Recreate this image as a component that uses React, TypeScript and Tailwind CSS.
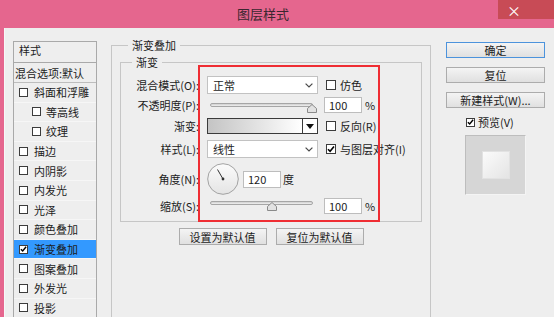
import React from 'react';

type Item = { name: string; indent?: boolean; checked?: boolean; active?: boolean };

const items: Item[] = [
  { name: '斜面和浮雕' },
  { name: '等高线', indent: true },
  { name: '纹理', indent: true },
  { name: '描边' },
  { name: '内阴影' },
  { name: '内发光' },
  { name: '光泽' },
  { name: '颜色叠加' },
  { name: '渐变叠加', checked: true, active: true },
  { name: '图案叠加' },
  { name: '外发光' },
  { name: '投影' },
];

const Check = ({ checked, className }: { checked?: boolean; className: string }) => (
  <span className={`flex shrink-0 items-center justify-center border border-[#3c3c3c] bg-white ${className}`}>
    {checked && (
      <svg width="8" height="8" viewBox="0 0 8 8">
        <path d="M1 4.2 L3.1 6.3 L7 1.5" stroke="#000" strokeWidth="1.6" fill="none" />
      </svg>
    )}
  </span>
);

const Select = ({ value }: { value: string }) => (
  <div className="flex h-[18px] w-[111px] items-center justify-between border border-[#c2c2c2] bg-white pl-[5px] pr-[4px]">
    <span>{value}</span>
    <svg width="8" height="5" viewBox="0 0 8 5">
      <path d="M0.6 0.6 L4 4 L7.4 0.6" stroke="#4a4a4a" strokeWidth="1.2" fill="none" />
    </svg>
  </div>
);

const Slider = ({ thumb, className }: { thumb: string; className: string }) => (
  <div className={`relative h-[12px] w-[111px] self-start ${className}`}>
    <div className="absolute left-[3px] right-[5px] top-0 h-[4px] rounded-full border border-[#a6a6a6] bg-gradient-to-b from-[#cfcfcf] to-[#f0f0f0]" />
    <svg className={`absolute top-[1px] ${thumb}`} width="10" height="9" viewBox="0 0 10 9">
      <path d="M5 0.5 L9.5 4.5 L9.5 8.5 L0.5 8.5 L0.5 4.5 Z" fill="#e2e2e2" stroke="#8a8a8a" strokeWidth="1" />
    </svg>
  </div>
);

const NumInput = ({ value, className = 'w-[38px]' }: { value: string; className?: string }) => (
  <div className={`flex h-[16px] items-center border border-[#bdbdbd] bg-white pl-[4px] ${className}`}>{value}</div>
);

const Row = ({ h, label, children, extra }: { h: string; label: string; children: React.ReactNode; extra?: React.ReactNode }) => (
  <div className={`flex items-center ${h}`}>
    <div className="w-[78px] text-right">{label}</div>
    <div className="ml-[8px] flex w-[111px] items-center self-stretch">{children}</div>
    <div className="ml-[6px] flex items-center">{extra}</div>
  </div>
);

const CheckLabel = ({ text, checked }: { text: string; checked?: boolean }) => (
  <div className="ml-[2px] flex items-center">
    <Check checked={checked} className="h-[10px] w-[10px]" />
    <span className="ml-[4px]">{text}</span>
  </div>
);

const Btn = ({ children, className = '', primary }: { children: React.ReactNode; className?: string; primary?: boolean }) => (
  <div
    className={`flex items-center justify-center bg-gradient-to-b from-[#f4f4f4] to-[#e0e0e0] ${
      primary ? 'border border-[#4c93dc]' : 'border border-[#acacac]'
    } ${className}`}
  >
    {children}
  </div>
);

const Dial = () => (
  <svg width="32" height="32" viewBox="0 0 32 32">
    <defs>
      <linearGradient id="dialg" x1="0" y1="0" x2="0" y2="1">
        <stop offset="0" stopColor="#fbfbfb" />
        <stop offset="1" stopColor="#e4e4e4" />
      </linearGradient>
    </defs>
    <circle cx="16" cy="16" r="15.3" fill="url(#dialg)" stroke="#a2a2a2" strokeWidth="1" />
    <line x1="16" y1="16" x2="10.5" y2="6.5" stroke="#333" strokeWidth="1" />
    <circle cx="16" cy="16" r="1.4" fill="#333" />
  </svg>
);

export default function App() {
  return (
    <div className="h-[317px] w-[554px] overflow-hidden bg-[#e5668e] font-['Noto_Sans_CJK_SC',sans-serif] text-[11px] leading-[14px] text-[#1c1c1c]">
      {/* title bar */}
      <div className="flex h-[28px]">
        <div className="flex-1 pl-[237px] pt-[5px] text-[13px] leading-[18px] text-[#3b2630]">图层样式</div>
        <div className="flex h-[19px] w-[56px] items-center bg-[#c84b56] pl-[9px] text-[14px] text-white">×</div>
      </div>

      {/* body */}
      <div className="ml-[4px] flex h-[289px] overflow-hidden border-l border-[#f7f7f7] bg-[#eeeeee]">
        {/* style list */}
        <div className="ml-[8px] mt-[13px] h-[300px] w-[84px] shrink-0 border-x border-t border-[#a9a9a9]">
          <div className="h-[21px] border-b border-[#a9a9a9] pl-[5px] pt-[1px]">样式</div>
          <div className="h-[20px] border-b border-[#bdbdbd] pl-[1px] pt-[3px] whitespace-nowrap">混合选项:默认</div>
          {items.map((it) => (
            <div
              key={it.name}
              className={`flex h-[19.6px] items-center border-b border-[#f6f6f6] ${it.indent ? 'pl-[18px]' : 'pl-[5px]'} ${
                it.active ? 'bg-[#3399ff]' : ''
              }`}
            >
              <Check checked={it.checked} className="h-[9px] w-[9px]" />
              <span className={it.indent ? 'ml-[5px]' : 'ml-[6px]'}>{it.name}</span>
            </div>
          ))}
        </div>

        {/* gradient overlay group */}
        <div className="ml-[14px] mt-[17px] h-[300px] w-[320px] shrink-0 border-x border-t border-[#c6c6c6]">
          <div className="-mt-[8px] ml-[16px] w-fit bg-[#eeeeee] px-[4px]">渐变叠加</div>

          <div className="relative ml-[8px] mt-[10px] w-[302px] border border-[#c6c6c6] pb-[7px]">
            <div className="-mt-[8px] ml-[11px] w-fit bg-[#eeeeee] px-[4px]">渐变</div>

            <div className="mt-[6px]">
              <Row h="h-[20px]" label="混合模式(O):" extra={<CheckLabel text="仿色" />}>
                <Select value="正常" />
              </Row>
              <Row
                h="h-[19px]"
                label="不透明度(P):"
                extra={
                  <div className="flex items-center">
                    <NumInput value="100" />
                    <span className="ml-[3px]">%</span>
                  </div>
                }
              >
                <Slider thumb="left-[100px]" className="mt-[8px]" />
              </Row>
              <Row h="h-[24px]" label="渐变:" extra={<CheckLabel text="反向(R)" />}>
                <div className="flex h-[16px] w-[111px] border border-[#3a3a3a]">
                  <div className="flex-1 bg-gradient-to-r from-[#c4c4c4] to-white" />
                  <div className="flex w-[15px] items-center justify-center border-l border-[#3a3a3a] bg-white">
                    <svg width="8" height="5" viewBox="0 0 8 5">
                      <path d="M0 0 L8 0 L4 5 Z" fill="#111" />
                    </svg>
                  </div>
                </div>
              </Row>
              <Row h="h-[22px]" label="样式(L):" extra={<CheckLabel text="与图层对齐(I)" checked />}>
                <Select value="线性" />
              </Row>
              <Row h="h-[38px]" label="角度(N):">
                <Dial />
                <NumInput value="120" className="ml-[4px] w-[38px] h-[17px]" />
                <span className="ml-[2px]">度</span>
              </Row>
              <Row
                h="h-[16px]"
                label="缩放(S):"
                extra={
                  <div className="flex items-center">
                    <NumInput value="100" />
                    <span className="ml-[3px]">%</span>
                  </div>
                }
              >
                <Slider thumb="left-[60px]" className="mt-[3px]" />
              </Row>
            </div>

            {/* highlight annotation */}
            <div className="pointer-events-none absolute left-[77px] top-[2px] h-[157px] w-[182px] border-2 border-[#ef2d33]" />
          </div>

          <div className="mt-[6px] flex justify-center gap-[9px]">
            <Btn className="h-[17px] w-[88px]">设置为默认值</Btn>
            <Btn className="h-[17px] w-[88px]">复位为默认值</Btn>
          </div>
        </div>

        {/* right column */}
        <div className="ml-[15px] mt-[14px] w-[99px] shrink-0">
          <Btn primary className="h-[16px]">确定</Btn>
          <Btn className="mt-[9px] h-[16px]">复位</Btn>
          <Btn className="mt-[9px] h-[16px]">新建样式(W)...</Btn>
          <div className="mt-[9px] flex h-[10px] items-center pl-[20px]">
            <Check checked className="h-[9px] w-[9px]" />
            <span className="ml-[3px]">预览(V)</span>
          </div>
          <div className="ml-[19px] mt-[8px] flex h-[60px] w-[61px] items-center justify-center border border-[#bdbdbd] border-b-[#f4f4f4] border-r-[#f4f4f4] bg-[#d6d6d6]">
            <div className="h-[28px] w-[28px] border border-[#e2e2e2] bg-gradient-to-br from-[#fbfbfb] to-[#e4e4e4]" />
          </div>
        </div>
      </div>
    </div>
  );
}
